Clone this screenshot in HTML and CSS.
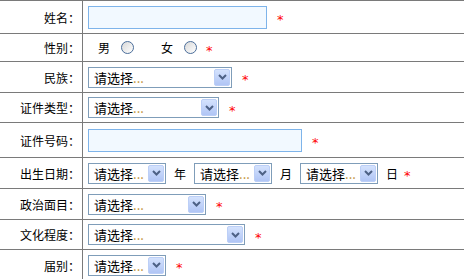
FILE: index.html
```html
<!DOCTYPE html>
<html lang="zh-CN">
<head>
    <meta charset="UTF-8">
    <title>个人信息</title>
    <link rel="stylesheet" href="styles.css">
</head>
<body>
    <table class="form">
        <tr class="row-name">
            <th>姓名：</th>
            <td><div class="field"><input type="text" class="text w-name" name="name"><span class="req">*</span></div></td>
        </tr>
        <tr class="row-sex">
            <th>性别：</th>
            <td>
                <div class="field sex">
                    <label class="opt">男 <input type="radio" class="radio" name="sex" value="m"></label>
                    <label class="opt">女 <input type="radio" class="radio" name="sex" value="f"></label>
                    <span class="req">*</span>
                </div>
            </td>
        </tr>
        <tr class="row-nation">
            <th>民族：</th>
            <td><div class="field"><div class="select w-nation"><span class="val">请选择<i>...</i></span><span class="arrow"><svg width="9" height="6" viewBox="0 0 9 6"><polyline points="1,1 4.5,4.5 8,1" /></svg></span></div><span class="req">*</span></div></td>
        </tr>
        <tr class="row-idtype">
            <th>证件类型：</th>
            <td><div class="field"><div class="select w-idtype"><span class="val">请选择<i>...</i></span><span class="arrow"><svg width="9" height="6" viewBox="0 0 9 6"><polyline points="1,1 4.5,4.5 8,1" /></svg></span></div><span class="req">*</span></div></td>
        </tr>
        <tr class="row-idno">
            <th>证件号码：</th>
            <td><div class="field"><input type="text" class="text w-idno" name="idno"><span class="req">*</span></div></td>
        </tr>
        <tr class="row-birth">
            <th>出生日期：</th>
            <td>
                <div class="field date">
                    <div class="select w-date"><span class="val">请选择<i>...</i></span><span class="arrow"><svg width="9" height="6" viewBox="0 0 9 6"><polyline points="1,1 4.5,4.5 8,1" /></svg></span></div>
                    <span class="unit">年</span>
                    <div class="select w-date"><span class="val">请选择<i>...</i></span><span class="arrow"><svg width="9" height="6" viewBox="0 0 9 6"><polyline points="1,1 4.5,4.5 8,1" /></svg></span></div>
                    <span class="unit">月</span>
                    <div class="select w-date"><span class="val">请选择<i>...</i></span><span class="arrow"><svg width="9" height="6" viewBox="0 0 9 6"><polyline points="1,1 4.5,4.5 8,1" /></svg></span></div>
                    <span class="unit">日</span>
                    <span class="req">*</span>
                </div>
            </td>
        </tr>
        <tr class="row-party">
            <th>政治面目：</th>
            <td><div class="field"><div class="select w-party"><span class="val">请选择<i>...</i></span><span class="arrow"><svg width="9" height="6" viewBox="0 0 9 6"><polyline points="1,1 4.5,4.5 8,1" /></svg></span></div><span class="req">*</span></div></td>
        </tr>
        <tr class="row-edu">
            <th>文化程度：</th>
            <td><div class="field"><div class="select w-edu"><span class="val">请选择<i>...</i></span><span class="arrow"><svg width="9" height="6" viewBox="0 0 9 6"><polyline points="1,1 4.5,4.5 8,1" /></svg></span></div><span class="req">*</span></div></td>
        </tr>
        <tr class="row-grade">
            <th>届别：</th>
            <td><div class="field"><div class="select w-date"><span class="val">请选择<i>...</i></span><span class="arrow"><svg width="9" height="6" viewBox="0 0 9 6"><polyline points="1,1 4.5,4.5 8,1" /></svg></span></div><span class="req">*</span></div></td>
        </tr>
    </table>
</body>
</html>
```

FILE: styles.css
```css
body {
    margin: 0;
    font-family: "Noto Sans CJK SC", "DejaVu Sans", sans-serif;
    font-size: 12px;
    color: #000;
    background: #fff;
}

.form {
    width: 100%;
    border-collapse: collapse;
    border-top: 1px solid #7a7a7a;
}

.form th {
    width: 74px;
    padding: 0 8px 0 0;
    text-align: right;
    font-weight: normal;
    font-feature-settings: "halt";
    white-space: nowrap;
    border-right: 1px solid #7a7a7a;
    border-bottom: 1px solid #7a7a7a;
}

.form td {
    padding: 0 0 0 5px;
    border-bottom: 1px solid #7a7a7a;
}

.row-name th, .row-name td { height: 32px; }
.row-sex th, .row-sex td { height: 27px; }
.row-nation th, .row-nation td { height: 30px; }
.row-idtype th, .row-idtype td { height: 29px; }
.row-idno th, .row-idno td { height: 34px; }
.row-birth th, .row-birth td { height: 30px; }
.row-party th, .row-party td { height: 30px; }
.row-edu th, .row-edu td { height: 29px; }
.row-grade th, .row-grade td { height: 30px; }

.field {
    display: flex;
    align-items: center;
    gap: 10px;
}

.req {
    color: #f00;
    font-size: 13px;
    padding-top: 5px;
    font-family: "DejaVu Sans", sans-serif;
}

.text {
    height: 23px;
    box-sizing: border-box;
    border: 1px solid #7eb4ea;
    background: #f2f9ff;
    padding: 0 4px;
    margin: 0;
}

.w-name { width: 179px; }
.w-idno { width: 214px; }

.select {
    display: inline-flex;
    align-items: center;
    height: 21px;
    box-sizing: border-box;
    border: 1px solid #7f9db9;
    background: #fff;
    padding: 1px;
}

.select .val {
    flex: 1;
    padding-left: 4px;
    font-size: 13px;
    white-space: nowrap;
    overflow: hidden;
}

.select .val i {
    font-style: normal;
    color: #c09030;
}

.select .arrow {
    width: 16px;
    height: 17px;
    box-sizing: border-box;
    border: 1px solid #bccff7;
    border-radius: 2px;
    background: linear-gradient(#d4e2fd, #b0c5f5);
    display: flex;
    align-items: center;
    justify-content: center;
}

.select .arrow polyline {
    fill: none;
    stroke: #4d6185;
    stroke-width: 2;
}

.w-nation { width: 144px; }
.w-idtype { width: 131px; }
.w-date { width: 78px; }
.w-party { width: 118px; }
.w-edu { width: 157px; }

.sex {
    gap: 0;
    padding-left: 10px;
}

.sex .opt {
    display: inline-flex;
    align-items: center;
    gap: 11px;
    margin-right: 27px;
}

.sex .opt + .opt {
    margin-right: 9px;
}

.radio {
    appearance: none;
    width: 13px;
    height: 13px;
    margin: 0;
    border: 1px solid #4c6f9b;
    border-radius: 50%;
    background: linear-gradient(135deg, #d8d8d8, #fff);
}

.date {
    gap: 0;
}

.date .unit {
    font-size: 12px;
    margin: 0 8px;
}

.date .req {
    margin-left: -2px;
}
```
